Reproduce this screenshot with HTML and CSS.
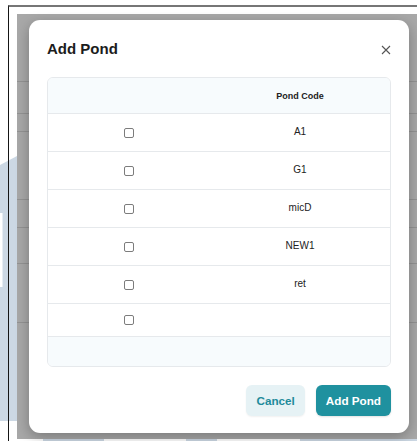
FILE: index.html
```html
<!DOCTYPE html>
<html lang="en">
<head>
<meta charset="utf-8">
<title>Add Pond</title>
<link rel="stylesheet" href="styles.css">
</head>
<body>
<svg class="watermark" width="417" height="441" viewBox="0 0 417 441" aria-hidden="true">
  <polygon points="0,165 17,156 17,421 0,421" fill="#ccd8e4"/>
  <rect x="0" y="213" width="2.5" height="74" fill="#ffffff"/>
  <rect x="43" y="436" width="61" height="5" fill="#ccd8e4"/>
  <rect x="186" y="436" width="31" height="5" fill="#ccd8e4"/>
  <rect x="300" y="436" width="117" height="5" fill="#ccd8e4"/>
</svg>

<div class="frame">
  <div class="app">
    <div class="bg-row r1"></div>
    <div class="bg-row r2"></div>
    <div class="bg-row r3"></div>
    <div class="bg-row r4"></div>
    <div class="bg-row r5"></div>
    <div class="bg-row r6"></div>
    <div class="bg-row r7"></div>

    <div class="overlay">
      <div class="modal" role="dialog" aria-labelledby="modal-title">
        <div class="modal-head">
          <h2 id="modal-title" class="modal-title">Add Pond</h2>
          <button class="close" aria-label="Close">
            <svg width="10" height="10" viewBox="0 0 10 10">
              <path d="M1 1 L9 9 M9 1 L1 9" stroke="#555" stroke-width="1.1" fill="none"/>
            </svg>
          </button>
        </div>

        <div class="grid">
          <div class="grid-row head">
            <div class="cell"></div>
            <div class="cell">Pond Code</div>
          </div>
          <div class="grid-row">
            <div class="cell"><input type="checkbox" class="check"></div>
            <div class="cell text">A1</div>
          </div>
          <div class="grid-row">
            <div class="cell"><input type="checkbox" class="check"></div>
            <div class="cell text">G1</div>
          </div>
          <div class="grid-row">
            <div class="cell"><input type="checkbox" class="check"></div>
            <div class="cell text">micD</div>
          </div>
          <div class="grid-row">
            <div class="cell"><input type="checkbox" class="check"></div>
            <div class="cell text">NEW1</div>
          </div>
          <div class="grid-row">
            <div class="cell"><input type="checkbox" class="check"></div>
            <div class="cell text">ret</div>
          </div>
          <div class="grid-row empty">
            <div class="cell"><input type="checkbox" class="check"></div>
            <div class="cell"></div>
          </div>
          <div class="grid-foot"></div>
        </div>

        <div class="modal-actions">
          <button class="btn btn-cancel">Cancel</button>
          <button class="btn btn-primary">Add Pond</button>
        </div>
      </div>
    </div>
  </div>
</div>
</body>
</html>
```

FILE: styles.css
```css
html, body {
  margin: 0;
  padding: 0;
  background: #ffffff;
  font-family: "Liberation Sans", Arial, sans-serif;
  overflow: hidden;
}

body {
  width: 417px;
  height: 441px;
  position: relative;
}

.watermark {
  position: absolute;
  left: 0;
  top: 0;
  z-index: 0;
}

.frame {
  position: relative;
  z-index: 1;
  margin: 5px 0 0 8px;
  height: 436px;
  border-top: 2px solid #767676;
  border-left: 1px solid #151515;
  box-sizing: border-box;
}

.app {
  position: relative;
  margin: 7px 0 0 8px;
  width: 400px;
  height: 425px;
  background: #ffffff;
}

/* rows of the page that sits under the dialog */
.bg-row {
  box-sizing: border-box;
  border-bottom: 1px solid #e0e0e0;
}
.r1 { height: 68px; }
.r2 { height: 32px; }
.r3 { height: 18px; }
.r4 { height: 68px; }
.r5 { height: 28px; }
.r6 { height: 36px; }
.r7 { height: 59px; }

.overlay {
  position: absolute;
  inset: 0;
  background: rgba(0, 0, 0, 0.34);
  padding: 6px 8px 6px 12px;
  box-sizing: border-box;
  display: flex;
}

.modal {
  flex: 1;
  background: #ffffff;
  border-radius: 11px;
  box-shadow: 0 4px 14px rgba(0, 0, 0, 0.28);
  padding: 20px 18px 17px 18px;
  box-sizing: border-box;
  display: flex;
  flex-direction: column;
}

.modal-head {
  display: flex;
  align-items: center;
  justify-content: space-between;
  height: 18px;
}

.modal-title {
  margin: 0;
  font-size: 15px;
  line-height: 18px;
  font-weight: 700;
  color: #1c1c1c;
}

.close {
  border: 0;
  background: none;
  padding: 0;
  margin: 1px 0 0 0;
  width: 10px;
  height: 10px;
  display: flex;
}

.grid {
  margin-top: 19px;
  border: 1px solid #e6e9ec;
  border-radius: 6px;
  overflow: hidden;
  font-size: 10px;
  color: #222;
}

.grid-row {
  display: grid;
  grid-template-columns: 162px 1fr;
  height: 38px;
  border-top: 1px solid #e6e9ec;
  box-sizing: border-box;
}

.grid-row.head {
  height: 35px;
  border-top: 0;
  background: #f7fbfd;
  font-weight: 700;
  font-size: 9px;
  color: #222;
}

.grid-row.empty {
  height: 33px;
}

.cell {
  display: flex;
  align-items: center;
  justify-content: center;
}

.cell.text {
  padding-bottom: 2px;
}

.check {
  appearance: none;
  -webkit-appearance: none;
  margin: 0;
  width: 10px;
  height: 10px;
  border: 1px solid #7c7c7c;
  border-radius: 2px;
  background: #fff;
  box-sizing: border-box;
}

.grid-foot {
  height: 30px;
  border-top: 1px solid #e6e9ec;
  background: #f7fbfd;
  box-sizing: border-box;
}

.modal-actions {
  margin-top: 18px;
  display: flex;
  justify-content: flex-end;
  gap: 11px;
}

.btn {
  border: 0;
  height: 31px;
  border-radius: 6px;
  font-family: "Liberation Sans", Arial, sans-serif;
  font-size: 11.7px;
  font-weight: 700;
  padding: 0 10px;
  cursor: pointer;
}

.btn-cancel {
  background: #e6f2f5;
  color: #1f8b9b;
  box-shadow: 0 1px 2px rgba(0, 0, 0, 0.06);
}

.btn-primary {
  background: #1f919f;
  color: #ffffff;
  box-shadow: 0 1px 2px rgba(0, 0, 0, 0.12);
}
```
